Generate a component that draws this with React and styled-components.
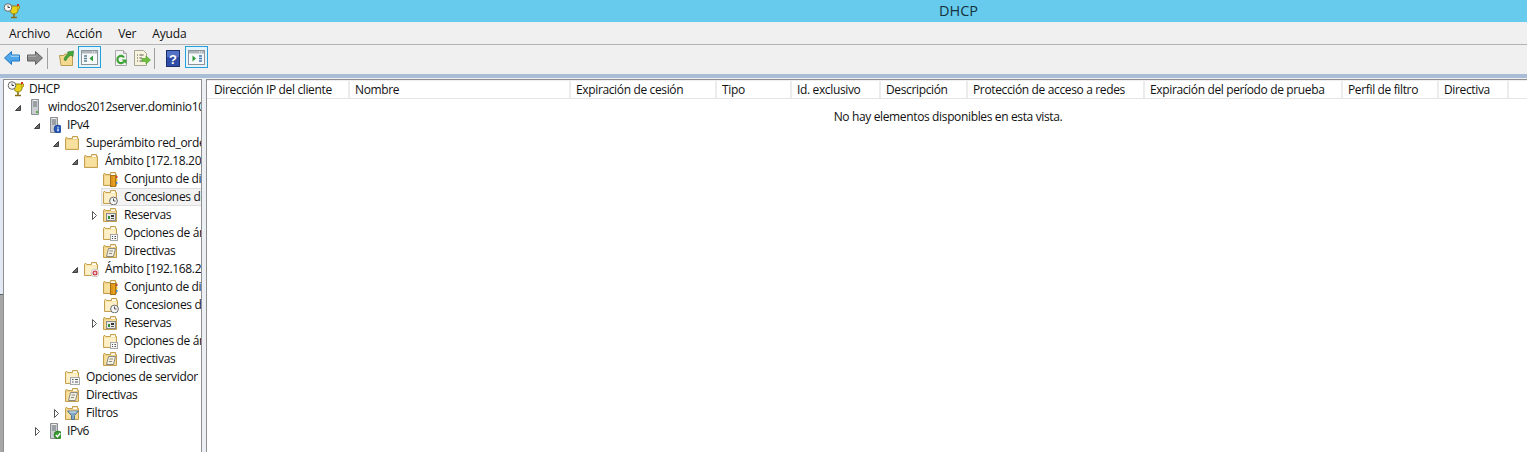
import React from 'react';
import styled, { createGlobalStyle } from 'styled-components';

const GlobalStyle = createGlobalStyle`
  html, body {
    margin: 0;
    padding: 0;
    background: #fff;
    overflow: hidden;
  }
  body {
    font-family: "Open Sans", "Noto Sans", "Liberation Sans", sans-serif;
    font-size: 12px;
    color: #000;
  }
`;

const Win = styled.div`
  width: 1527px;
  height: 452px;
  display: flex;
  flex-direction: column;
  overflow: hidden;
`;

const TitleBar = styled.div`
  height: 22px;
  flex: none;
  background: #66cbec;
  display: flex;
  align-items: center;
  padding-left: 3px;
`;

const Title = styled.div`
  margin-left: 919px;
  font-size: 14.5px;
  line-height: 20px;
  color: #16323c;
`;

const MenuBar = styled.div`
  height: 22px;
  flex: none;
  background: #f0f0f0;
  border-bottom: 1px solid #b4b4b4;
  display: flex;
  align-items: center;
  padding-left: 9px;
  gap: 16px;
`;

const MenuItem = styled.span`
  font-size: 12px;
  letter-spacing: ${p => p.$ls || -0.1}px;
  color: #111;
`;

const ToolBar = styled.div`
  height: 29px;
  flex: none;
  background: #f0f0f0;
  display: flex;
  align-items: center;
  padding-left: 4px;
`;

const ToolIcon = styled.span`
  display: flex;
  width: 16px;
  height: 16px;
  margin-left: ${p => p.$ml || 0}px;
  margin-top: -3px;
`;

const ToolSep = styled.span`
  width: 1px;
  height: 21px;
  background: #a0a0a0;
  margin-left: ${p => p.$ml || 0}px;
  margin-top: -3px;
`;

const ToggleBtn = styled.span`
  box-sizing: border-box;
  width: 23px;
  height: 22px;
  border: 1px solid #26a0da;
  background: #e5f3fb;
  display: flex;
  align-items: center;
  justify-content: center;
  margin-left: ${p => p.$ml || 0}px;
  margin-top: -5px;
`;

const Band = styled.div`
  height: 4px;
  flex: none;
  background: #a9bdd6;
`;

const Main = styled.div`
  flex: 1;
  min-height: 0;
  display: flex;
  background: #eceff4;
  padding-top: 1px;
`;

const Rail = styled.div`
  width: 3px;
  flex: none;
  margin-top: -1px;
  background: #a6a6a6;
`;

const RailTop = styled.div`
  height: 216px;
  background: #e2e9f5;
  border-bottom: 1px solid #5f6368;
`;

const TreePane = styled.div`
  width: 199px;
  flex: none;
  box-sizing: border-box;
  background: #fff;
  border-left: 1px solid #8f8f8f;
  border-right: 1px solid #8f8f8f;
  border-top: 1px solid #8f8f8f;
  overflow: hidden;
`;

const Row = styled.div`
  position: relative;
  height: 18px;
  display: flex;
  align-items: center;
  white-space: nowrap;
  padding-left: ${p => p.$indent}px;
`;

const Arrow = styled.span`
  width: 11px;
  display: flex;
  flex: none;
`;

const Label = styled.span`
  margin-left: ${p => p.$gap || 6}px;
  letter-spacing: -0.34px;
  line-height: 16px;
  color: #111;
`;

const Selection = styled.span`
  position: absolute;
  left: ${p => p.$left}px;
  right: 0;
  top: 0;
  bottom: 0;
  background: #f3f3f3;
  border: 1px solid #dedede;
  border-right: 0;
`;

const RowBody = styled.span`
  position: relative;
  display: flex;
  align-items: center;
`;

const Splitter = styled.div`
  width: 4px;
  flex: none;
`;

const ListPane = styled.div`
  flex: 1;
  min-width: 0;
  background: #fff;
  border-left: 1px solid #8f8f8f;
  border-top: 1px solid #8f8f8f;
`;

const Header = styled.div`
  height: 17px;
  display: flex;
  border-bottom: 1px solid #e5e5e5;
  border-top: 1px solid #eeeeee;
`;

const HeaderCell = styled.div`
  width: ${p => p.$w}px;
  flex: none;
  box-sizing: border-box;
  padding-left: ${p => p.$pad}px;
  line-height: 18px;
  letter-spacing: -0.36px;
  border-right: 2px solid #ececec;
  white-space: nowrap;
  overflow: hidden;
  color: #111;
`;

const Empty = styled.div`
  text-align: center;
  margin-top: 10px;
  padding-left: 162px;
  line-height: 16px;
  letter-spacing: -0.36px;
  color: #111;
`;

const Svg = ({ children, w = 16, h = 16 }) => (
  <svg width={w} height={h} viewBox={`0 0 ${w} ${h}`} style={{ flex: 'none', display: 'block' }}>
    {children}
  </svg>
);

const Open = () => (
  <svg width="7" height="9" viewBox="0 0 7 9" style={{ display: 'block' }}>
    <path d="M5.5 2.5V7.5H0.5Z" fill="#6a6a6a" stroke="#404040" />
  </svg>
);

const Closed = () => (
  <svg width="7" height="11" viewBox="0 0 7 11" style={{ display: 'block' }}>
    <path d="M1.5 1.5V9.5L5.5 5.5Z" fill="#fff" stroke="#555" />
  </svg>
);

const FolderShape = ({ light }) => (
  <>
    <path d="M1.5 3.5V14.5H14.5V3.5H13.5V1.5H8.5V3.5H3.5L3 2.5H2Z" fill={light ? '#fbe6ac' : '#f0d084'} stroke="#c2a050" />
    <path d="M9 2.5H13V4H9Z" fill="#fff" />
    <path d="M2.5 5H13.5V13.5H2.5Z" fill={light ? '#fdf0c9' : '#f8e09e'} />
  </>
);

const ClockBadge = () => (
  <>
    <circle cx="11.5" cy="12" r="3.9" fill="#f4f4f4" stroke="#6e6e6e" />
    <path d="M11.5 9.5V12H13.5" stroke="#555" fill="none" />
  </>
);

const BookBadge = () => (
  <>
    <rect x="8.5" y="4.5" width="5" height="11" fill="#eda21e" stroke="#a9701a" />
    <path d="M10 5V15" stroke="#c9861c" />
    <path d="M14 6H15.5" stroke="#d43c2a" strokeWidth="2" />
    <path d="M14 9H15.5" stroke="#e6c21e" strokeWidth="2" />
    <path d="M14 12H15.5" stroke="#3f8fd8" strokeWidth="2" />
  </>
);

const GridBadge = () => (
  <>
    <rect x="4.5" y="6.5" width="9" height="7" fill="#e8e8e8" stroke="#8a8a8a" />
    <rect x="6" y="9" width="2" height="3" fill="#2f8f3a" />
    <rect x="9" y="8" width="3" height="2" fill="#333" />
    <rect x="9" y="11" width="3" height="1" fill="#555" />
  </>
);

const ListBadge = ({ big }) => (
  <>
    <rect x={big ? 6.5 : 8.5} y={big ? 8.5 : 9.5} width={big ? 9 : 7} height={big ? 7 : 6} fill="#f5f5f5" stroke="#a8a8a8" />
    <path d={big ? 'M8 10.5H9.5M11 10.5H14M8 13H9.5M11 13H14' : 'M10 11.5H11M12.5 11.5H14M10 13.5H11M12.5 13.5H14'} stroke="#555" />
  </>
);

const DocBadge = () => (
  <>
    <path d="M6.5 5.5H13.5L11.5 13.5H4.5Z" fill="#f3f0e2" stroke="#8a8a80" />
    <path d="M7.5 8H11M7 10.5H10" stroke="#8a8a80" />
  </>
);

const FilterBadge = () => (
  <>
    <path d="M3.5 6H14.5L10.5 10.5V14.5H7.5V10.5Z" fill="#7fa8c9" stroke="#56748c" />
    <path d="M5.5 7H12.5" stroke="#dfeaf2" />
  </>
);

const AlertBadge = () => (
  <>
    <circle cx="12" cy="12" r="3.9" fill="#fff" stroke="#c8c8c8" />
    <circle cx="12" cy="12" r="2.5" fill="#c8202c" />
    <path d="M10.5 12H13.5M12 10.5V13.5" stroke="#fff" />
  </>
);

const FolderIcon = ({ badge: Badge, light, big }) => (
  <Svg>
    <FolderShape light={light} />
    {Badge && <Badge big={big} />}
  </Svg>
);

const ServerIcon = ({ badge }) => (
  <Svg>
    <g transform="translate(2 0)">
      <path d="M3.5 0.5H10.5V15.5H3.5Z" fill="#c9cdd1" stroke="#8b9094" />
      <path d="M5 3H9M5 5H9M5 7H9" stroke="#6d7276" />
      <path d="M5 1.5H9" stroke="#f2f2f2" />
      {!badge && <rect x="8" y="12" width="2" height="2" fill="#5bb04a" />}
      {badge === 'info' && (
        <>
          <circle cx="11" cy="12" r="4" fill="#2457b8" stroke="#173a80" strokeWidth=".6" />
          <path d="M11 9.8V10.8M11 11.5V14.2" stroke="#fff" strokeWidth="1.3" />
        </>
      )}
      {badge === 'ok' && (
        <>
          <circle cx="11" cy="12" r="4" fill="#3a9a32" stroke="#246b20" strokeWidth=".6" />
          <path d="M8.8 12L10.5 13.8L13.3 10.3" stroke="#fff" strokeWidth="1.4" fill="none" />
        </>
      )}
    </g>
  </Svg>
);

const DhcpIcon = () => (
  <Svg w={17} h={16}>
    <path d="M8 14.5H14M11 10V14.5" stroke="#8a6f1d" strokeWidth="1.6" fill="none" />
    <path d="M7 3H15V7C15 9.5 13 11 11 11C9 11 7 9.5 7 7Z" fill="#e9d21a" stroke="#8f8412" />
    <path d="M15 3H16.5V5.5L15 6.5" fill="#f0d020" stroke="#a39315" />
    <rect x="14" y="1" width="2" height="2" fill="#d6342a" />
    <circle cx="5" cy="4.5" r="3.8" fill="#f7f7f7" stroke="#6a6a6a" />
    <path d="M5 2.5V4.5H7" stroke="#444" fill="none" />
  </Svg>
);

const BackIcon = () => (
  <Svg>
    <path d="M0.5 8L7.5 1.5V5H15.5V11H7.5V14.5Z" fill="#4da6ea" stroke="#1f77c4" />
    <path d="M7 5.5V6.2H15" stroke="#b9e0fb" fill="none" />
  </Svg>
);

const ForwardIcon = () => (
  <Svg>
    <path d="M15.5 8L8.5 1.5V5H0.5V11H8.5V14.5Z" fill="#8b8b8b" stroke="#5f5f5f" />
    <path d="M1 6.2H9V5.5" stroke="#b7b7b7" fill="none" />
  </Svg>
);

const UpFolderIcon = () => (
  <Svg>
    <path d="M0.5 5.5H5L6 4H13.5V15.5H2Z" fill="#f4d98f" stroke="#b99c52" />
    <path d="M5 10C5.5 6.5 7.5 4.5 9.5 4L8.5 2L14.5 1L14 6.5L12 5.2C10 6 8 8 7 10.5Z" fill="#43a73b" stroke="#2a7a26" strokeWidth=".6" />
  </Svg>
);

const PaneIcon = ({ side }) => (
  <Svg w={17} h={15}>
    <rect x="0.5" y="0.5" width="16" height="14" fill="#f7f9fb" stroke="#8d9499" />
    <rect x="1" y="1" width="15" height="2.5" fill="#aeb6bb" />
    <path d="M13 2H14M11 2H12" stroke="#fff" />
    {side === 'left' ? (
      <>
        <path d="M3 6H6M3 8.5H6M3 11H6" stroke="#5a7f94" strokeWidth="1.3" />
        <path d="M12 5.5V11.5L8.5 8.5Z" fill="#2e9a3a" />
      </>
    ) : (
      <>
        <path d="M11 6H14M11 8.5H14M11 11H14" stroke="#3f78b4" strokeWidth="1.3" />
        <path d="M4.5 5.5V11.5L8 8.5Z" fill="#2e9a3a" />
      </>
    )}
  </Svg>
);

const RefreshIcon = () => (
  <Svg>
    <path d="M2.5 0.5H10.5L13.5 3.5V15.5H2.5Z" fill="#f4f4f4" stroke="#a8a8a8" />
    <path d="M10.5 0.5V3.5H13.5" fill="#ddd" stroke="#a8a8a8" />
    <path d="M11 7.5A3.6 3.6 0 1 0 11 11.5" fill="none" stroke="#3da335" strokeWidth="2.2" />
    <path d="M8.5 9.5H13.5V14Z" fill="#3da335" />
  </Svg>
);

const ExportIcon = () => (
  <Svg w={17} h={16}>
    <path d="M0.5 0.5H9.5L12.5 3.5V15.5H0.5Z" fill="#f7f3dc" stroke="#a5a393" />
    <path d="M3 5H4M5.5 5H9.5M3 8H4M5.5 8H8M3 11H4M5.5 11H8" stroke="#555" />
    <path d="M8 8.5H12V6L16.5 10L12 14V11.5H8Z" fill="#6fbf3c" stroke="#4b9a2b" strokeWidth=".6" />
  </Svg>
);

const HelpIcon = () => (
  <svg width="14" height="17" viewBox="0 0 14 17" style={{ display: 'block' }}>
    <rect x="0.5" y="0.5" width="13" height="16" fill="#2f4da6" stroke="#1c2f6e" />
    <rect x="1" y="1" width="12" height="6" fill="#5573c6" />
    <text x="7" y="13.5" textAnchor="middle" fontSize="13" fontWeight="700" fontFamily="Liberation Sans, sans-serif" fill="#fff">?</text>
  </svg>
);

// indent = text x - 37 with an arrow, text x - 26 without
const ROWS = [
  { indent: 3, icon: <DhcpIcon />, text: 'DHCP', gap: 5 },
  { indent: 11, arrow: 'open', icon: <ServerIcon />, text: 'windos2012server.dominio10' },
  { indent: 30, arrow: 'open', icon: <ServerIcon badge="info" />, text: 'IPv4' },
  { indent: 49, arrow: 'open', icon: <FolderIcon />, text: 'Superámbito red_ordenadores' },
  { indent: 68, arrow: 'open', icon: <FolderIcon />, text: 'Ámbito [172.18.20.0]' },
  { indent: 98, icon: <FolderIcon badge={BookBadge} />, text: 'Conjunto de direcciones' },
  { indent: 98, icon: <FolderIcon light badge={ClockBadge} />, text: 'Concesiones de direcciones', selected: true },
  { indent: 87, arrow: 'closed', icon: <FolderIcon badge={GridBadge} />, text: 'Reservas' },
  { indent: 98, icon: <FolderIcon light badge={ListBadge} />, text: 'Opciones de ámbito' },
  { indent: 98, icon: <FolderIcon badge={DocBadge} />, text: 'Directivas' },
  { indent: 68, arrow: 'open', icon: <FolderIcon light badge={AlertBadge} />, text: 'Ámbito [192.168.20.0]' },
  { indent: 98, icon: <FolderIcon badge={BookBadge} />, text: 'Conjunto de direcciones' },
  { indent: 99, icon: <FolderIcon light badge={ClockBadge} />, text: 'Concesiones de direcciones' },
  { indent: 87, arrow: 'closed', icon: <FolderIcon badge={GridBadge} />, text: 'Reservas' },
  { indent: 98, icon: <FolderIcon light badge={ListBadge} />, text: 'Opciones de ámbito' },
  { indent: 98, icon: <FolderIcon badge={DocBadge} />, text: 'Directivas' },
  { indent: 60, icon: <FolderIcon light badge={ListBadge} big />, text: 'Opciones de servidor' },
  { indent: 60, icon: <FolderIcon badge={DocBadge} />, text: 'Directivas' },
  { indent: 49, arrow: 'closed', icon: <FolderIcon badge={FilterBadge} />, text: 'Filtros' },
  { indent: 30, arrow: 'closed', icon: <ServerIcon badge="ok" />, text: 'IPv6' },
];

const COLUMNS = [
  ['Dirección IP del cliente', 143, 7],
  ['Nombre', 221, 5],
  ['Expiración de cesión', 146, 5],
  ['Tipo', 75, 5],
  ['Id. exclusivo', 89, 5],
  ['Descripción', 87, 5],
  ['Protección de acceso a redes', 177, 5],
  ['Expiración del período de prueba', 198, 5],
  ['Perfil de filtro', 96, 5],
  ['Directiva', 70, 5],
];

export default function App() {
  return (
    <Win>
      <GlobalStyle />
      <TitleBar>
        <DhcpIcon />
        <Title>DHCP</Title>
      </TitleBar>
      <MenuBar>
        <MenuItem>Archivo</MenuItem>
        <MenuItem>Acción</MenuItem>
        <MenuItem $ls={-0.3}>Ver</MenuItem>
        <MenuItem>Ayuda</MenuItem>
      </MenuBar>
      <ToolBar>
        <ToolIcon><BackIcon /></ToolIcon>
        <ToolIcon $ml={7}><ForwardIcon /></ToolIcon>
        <ToolSep $ml={4} />
        <ToolIcon $ml={11}><UpFolderIcon /></ToolIcon>
        <ToggleBtn $ml={3}><PaneIcon side="left" /></ToggleBtn>
        <ToolIcon $ml={12}><RefreshIcon /></ToolIcon>
        <ToolIcon $ml={5}><ExportIcon /></ToolIcon>
        <ToolSep $ml={4} />
        <ToolIcon $ml={11}><HelpIcon /></ToolIcon>
        <ToggleBtn $ml={3}><PaneIcon side="right" /></ToggleBtn>
      </ToolBar>
      <Band />
      <Main>
        <Rail><RailTop /></Rail>
        <TreePane>
          {ROWS.map((row, i) => (
            <Row key={i} $indent={row.indent}>
              {row.selected && <Selection $left={97} />}
              <RowBody>
                {row.arrow && <Arrow>{row.arrow === 'open' ? <Open /> : <Closed />}</Arrow>}
                {row.icon}
                <Label $gap={row.gap}>{row.text}</Label>
              </RowBody>
            </Row>
          ))}
        </TreePane>
        <Splitter />
        <ListPane>
          <Header>
            {COLUMNS.map(([name, w, pad]) => (
              <HeaderCell key={name} $w={w} $pad={pad}>{name}</HeaderCell>
            ))}
          </Header>
          <Empty>No hay elementos disponibles en esta vista.</Empty>
        </ListPane>
      </Main>
    </Win>
  );
}
